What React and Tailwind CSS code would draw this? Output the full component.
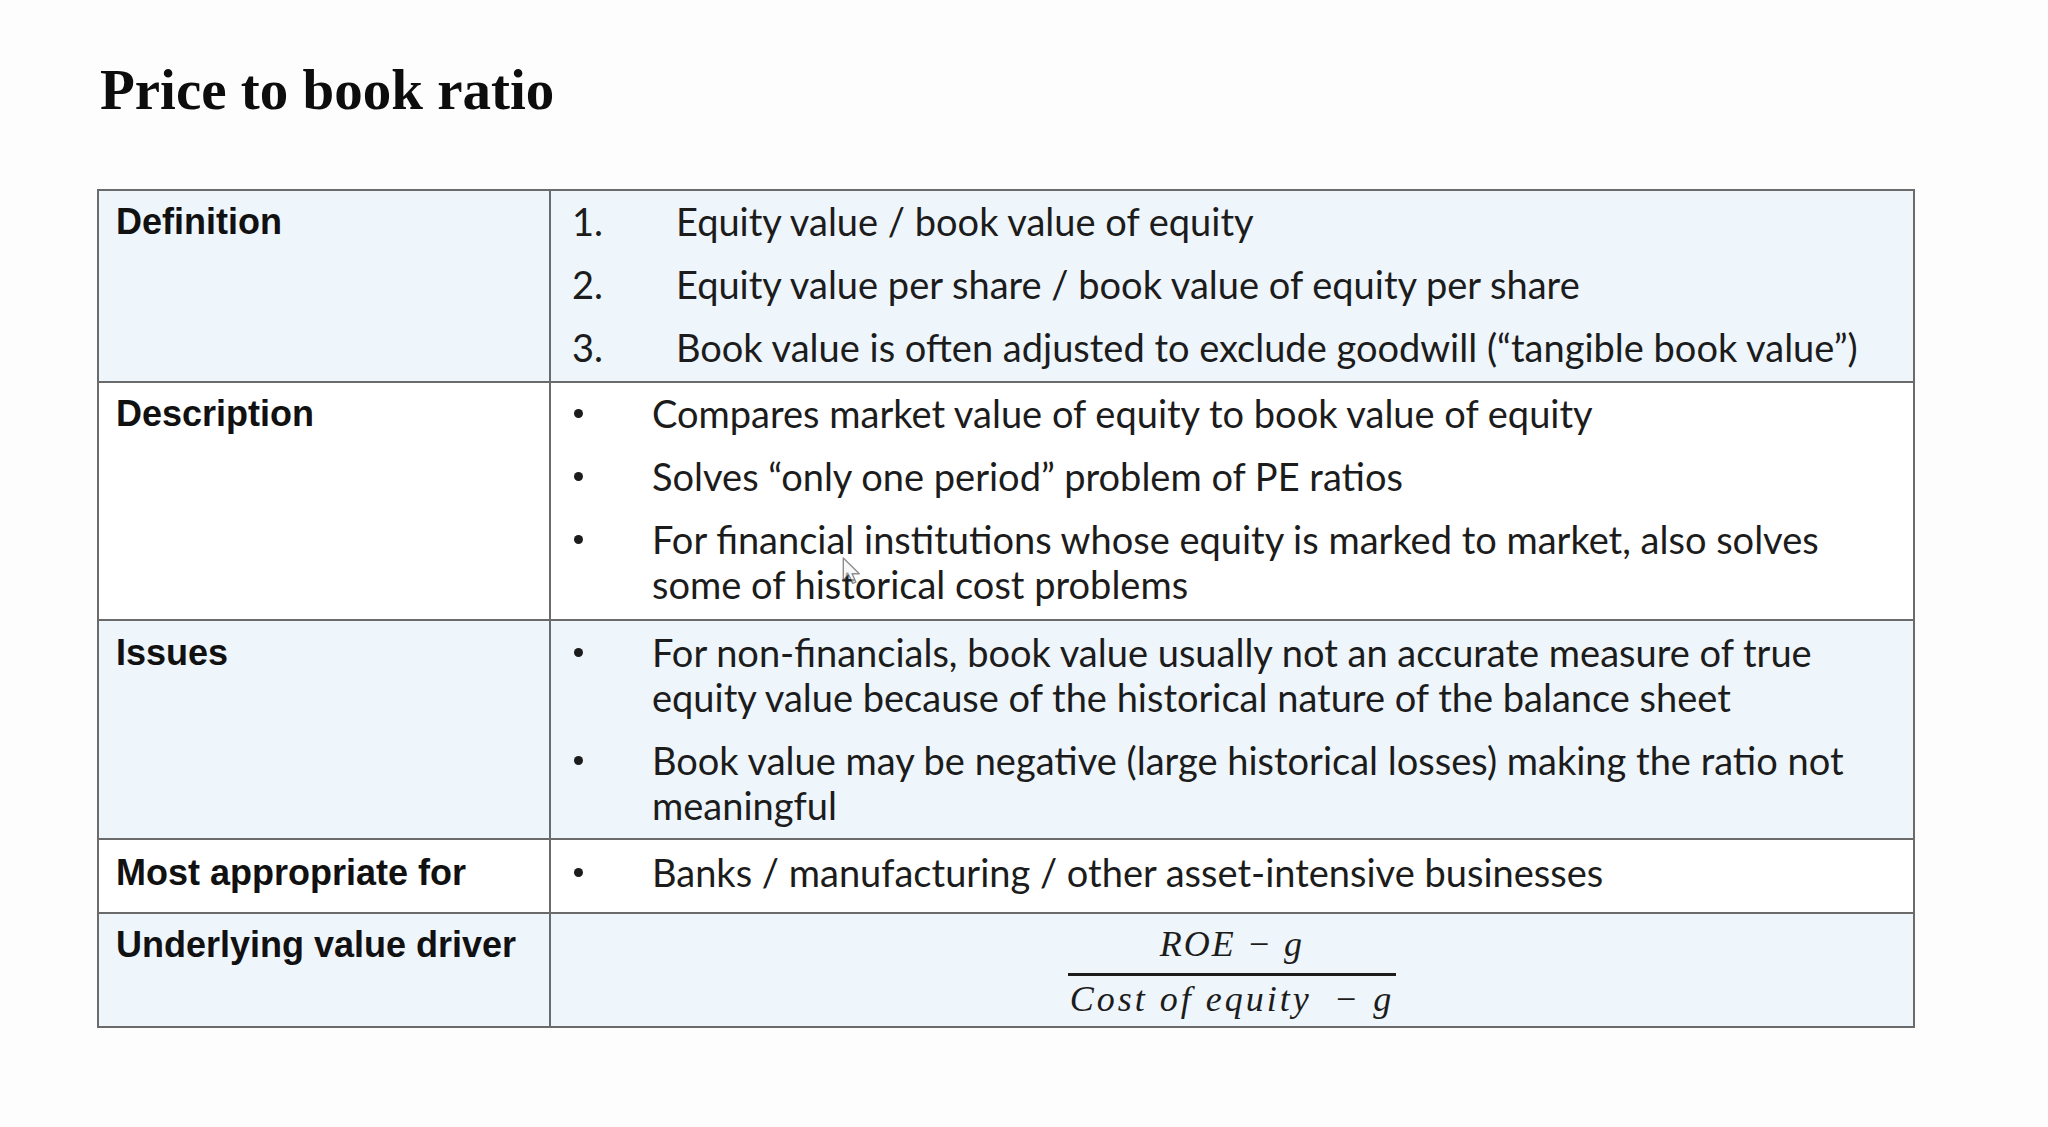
const body = { fontFamily: "Lato, 'Open Sans', sans-serif" };
const label = { fontFamily: "'Liberation Sans', Arial, sans-serif" };

function Bullet({ children }) {
  return (
    <div className="flex items-start">
      <div className="w-[101px] shrink-0 pl-[23px] pt-[18px]">
        <div className="h-[9px] w-[9px] rounded-full bg-[#1c1c1c]" />
      </div>
      <div className="whitespace-nowrap">{children}</div>
    </div>
  );
}

function Numbered({ n, children }) {
  return (
    <div className="flex items-start">
      <div className="w-[125px] shrink-0 pl-[21px]">{n}.</div>
      <div className="whitespace-nowrap">{children}</div>
    </div>
  );
}

function Row({ title, tint, first, className, children }) {
  return (
    <div
      className={`grid grid-cols-[452px_1fr] ${tint ? "bg-[#eef5fb]" : "bg-white"} ${
        first ? "" : "border-t-2 border-[#6b6b6b]"
      }`}
    >
      <div
        style={label}
        className={`border-r-2 border-[#6b6b6b] pl-[17px] text-[36px] font-bold leading-[45px] text-[#111] ${className}`}
      >
        {title}
      </div>
      <div
        style={body}
        className={`flex flex-col gap-[18px] text-[38px] leading-[45px] text-[#1c1c1c] ${className}`}
      >
        {children}
      </div>
    </div>
  );
}

export default function App() {
  return (
    <div className="relative min-h-screen w-full bg-[#fdfdfd] pl-[97px] pt-[62px]">
      <h1
        style={{ fontFamily: "'Liberation Serif', 'Times New Roman', serif" }}
        className="pl-[3px] text-[57px] font-bold leading-[56px] text-[#0d0d0d]"
      >
        Price to book ratio
      </h1>

      <div className="mt-[71px] w-[1818px] border-2 border-[#6b6b6b]">
        {/* Definition */}
        <Row title="Definition" tint first className="pt-[8px] pb-[11px]">
          <Numbered n={1}>Equity value / book value of equity</Numbered>
          <Numbered n={2}>Equity value per share / book value of equity per share</Numbered>
          <Numbered n={3}>Book value is often adjusted to exclude goodwill (“tangible book value”)</Numbered>
        </Row>

        {/* Description */}
        <Row title="Description" className="pt-[8px] pb-[12px]">
          <Bullet>Compares market value of equity to book value of equity</Bullet>
          <Bullet>Solves “only one period” problem of PE ratios</Bullet>
          <Bullet>
            For financial institutions whose equity is marked to market, also solves
            <br />
            some of historical cost problems
          </Bullet>
        </Row>

        {/* Issues */}
        <Row title="Issues" tint className="pt-[9px] pb-[10px]">
          <Bullet>
            For non-financials,  book value usually not an accurate measure of true
            <br />
            equity value because of the historical nature of the balance sheet
          </Bullet>
          <Bullet>
            Book value may be negative (large historical losses) making the ratio not
            <br />
            meaningful
          </Bullet>
        </Row>

        {/* Most appropriate for */}
        <Row title="Most appropriate for" className="pt-[10px] pb-[17px]">
          <Bullet>Banks / manufacturing / other asset-intensive businesses</Bullet>
        </Row>

        {/* Underlying value driver */}
        <div className="grid h-[114px] grid-cols-[452px_1fr] border-t-2 border-[#6b6b6b] bg-[#eef5fb]">
          <div
            style={label}
            className="border-r-2 border-[#6b6b6b] pl-[17px] pt-[8px] text-[36px] font-bold leading-[45px] text-[#111]"
          >
            Underlying value driver
          </div>
          <div className="flex justify-center pt-[10px]">
            <div
              style={{ fontFamily: "'Liberation Serif', 'Times New Roman', serif" }}
              className="inline-flex flex-col items-center text-[36px] italic leading-[40px] text-[#1c1c1c]"
            >
              <div className="tracking-[2px]">ROE − g</div>
              <div className="mt-[9px] h-[3px] w-full bg-[#1c1c1c]" />
              <div className="mt-[3px] flex px-[2px] tracking-[3px]">
                <span>Cost of equity</span>
                <span className="ml-[22px]">− g</span>
              </div>
            </div>
          </div>
        </div>
      </div>

      {/* mouse pointer left on the slide */}
      <svg
        className="absolute left-[842px] top-[557px] opacity-60"
        width="22"
        height="30"
        viewBox="0 0 12 17"
      >
        <path
          d="M0.5 0.5 L0.5 13 L3.6 10.2 L5.8 15 L7.6 14.2 L5.5 9.5 L9.6 9.5 Z"
          fill="#f4f4f4"
          stroke="#444"
          strokeWidth="0.8"
          strokeLinejoin="round"
        />
      </svg>
    </div>
  );
}
